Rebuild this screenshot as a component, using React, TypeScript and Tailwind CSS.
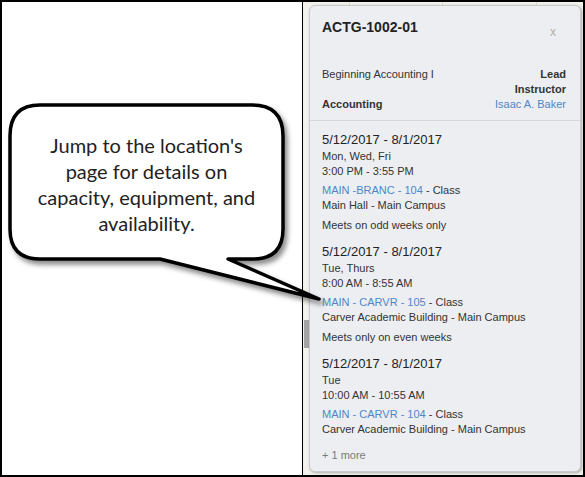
const sections = [
  {
    dates: "5/12/2017 - 8/1/2017",
    days: "Mon, Wed, Fri",
    time: "3:00 PM - 3:55 PM",
    room: "MAIN -BRANC - 104",
    building: "Main Hall - Main Campus",
    note: "Meets on odd weeks only",
  },
  {
    dates: "5/12/2017 - 8/1/2017",
    days: "Tue, Thurs",
    time: "8:00 AM - 8:55 AM",
    room: "MAIN - CARVR - 105",
    building: "Carver Academic Building - Main Campus",
    note: "Meets only on even weeks",
  },
  {
    dates: "5/12/2017 - 8/1/2017",
    days: "Tue",
    time: "10:00 AM - 10:55 AM",
    room: "MAIN - CARVR - 104",
    building: "Carver Academic Building - Main Campus",
    note: "",
  },
];

function Bubble() {
  return (
    <div className="relative ml-[6px] mt-[101px] h-[158px] w-[277px]">
      <svg
        className="absolute left-0 top-0 overflow-visible"
        width="277"
        height="158"
        viewBox="0 0 277 158"
      >
        <defs>
          <filter id="bubble-shadow" x="-10%" y="-10%" width="130%" height="140%">
            <feDropShadow dx="3" dy="4" stdDeviation="2.5" floodColor="#000" floodOpacity="0.45" />
          </filter>
        </defs>
        <path
          d="M32 2 H244 Q275 2 275 33 V126 Q275 156 245 156 H220 L311 196 L152 156 H32 Q2 156 2 126 V33 Q2 2 32 2 Z"
          fill="#fff"
          stroke="#000"
          strokeWidth="3.5"
          strokeLinejoin="round"
          filter="url(#bubble-shadow)"
        />
      </svg>
      <div className="relative flex h-full items-center justify-center pt-[4px] text-center font-['Lato','Open_Sans',sans-serif] text-[20px] leading-[26px] text-[#222]">
        <p className="w-[226px]">
          Jump to the location's page for details on capacity, equipment, and availability.
        </p>
      </div>
    </div>
  );
}

export default function App() {
  return (
    <div className="flex h-[477px] w-[585px] border-2 border-black bg-white font-['Liberation_Sans',Arial,sans-serif]">
      <div className="relative z-10 w-[301px] shrink-0 border-r border-black">
        <Bubble />
      </div>

      <div className="relative flex flex-1 bg-[#f3f2ec] pb-[3px] pl-[6px] pr-[2px] pt-[3px]">
        <div className="absolute left-[1px] top-[318px] h-[28px] w-[5px] bg-[#a5a5a5]" />
        <div className="absolute inset-x-0 top-0 flex h-[3px] justify-around">
          <span className="w-px bg-[#dddad0]" />
          <span className="w-px bg-[#dddad0]" />
          <span className="w-px bg-[#dddad0]" />
        </div>

        <div className="relative flex flex-1 flex-col rounded-[6px] border border-[#c9cacd] bg-[#edeef2] shadow-[1px_1px_3px_rgba(0,0,0,0.3)]">
          <div className="border-b border-[#d6d7da] pb-[8px] pl-[12px] pr-[14px] pt-[13px]">
            <div className="flex items-start justify-between">
              <h1 className="text-[14px] font-bold leading-[16px] text-[#222]">ACTG-1002-01</h1>
              <span className="mr-[10px] mt-[6px] text-[12px] leading-[14px] text-[#b0b0b0]">x</span>
            </div>
            <div className="mt-[28px] flex justify-between text-[11px] leading-[15px] text-[#333]">
              <div className="flex flex-col justify-between">
                <span>Beginning Accounting I</span>
                <span className="font-bold">Accounting</span>
              </div>
              <div className="flex w-[76px] flex-col items-end text-right">
                <span className="font-bold">Lead Instructor</span>
                <span className="text-[#4d87c7]">Isaac A. Baker</span>
              </div>
            </div>
          </div>

          <div className="flex flex-col pl-[12px] pr-[14px] pt-[10px] text-[11px] leading-[15px] text-[#333]">
            <div className="flex flex-col gap-[10px]">
              {sections.map((s, i) => (
                <div key={i} className="flex flex-col">
                  <span className="text-[13px] leading-[18px] text-[#222]">{s.dates}</span>
                  <span>{s.days}</span>
                  <span>{s.time}</span>
                  <div className="mt-[4px] flex flex-col">
                    <span>
                      <span className="text-[#4d87c7]">{s.room}</span> - Class
                    </span>
                    <span>{s.building}</span>
                  </div>
                  {s.note && <span className="mt-[5px]">{s.note}</span>}
                </div>
              ))}
            </div>
            <span className="mt-[11px] text-[#7a7a7a]">+ 1 more</span>
          </div>
        </div>
      </div>
    </div>
  );
}
